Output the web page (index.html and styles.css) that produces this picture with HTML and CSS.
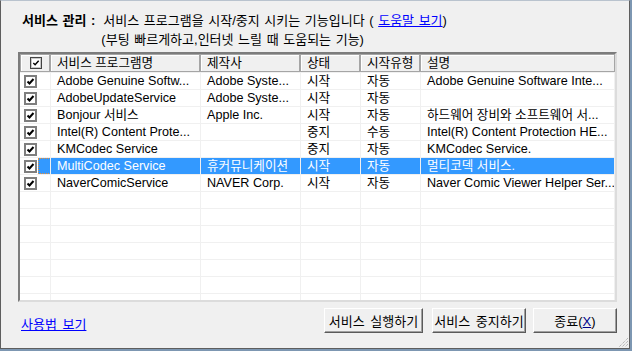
FILE: index.html
```html
<!DOCTYPE html>
<html lang="ko">
<head>
    <meta charset="UTF-8">
    <title>서비스 관리</title>
    <link rel="stylesheet" href="styles.css">
</head>
<body>
    <div class="frame">
        <div class="dlg">
            <div class="intro">
                <b class="intro-title">서비스 관리 :</b>
                <span>서비스 프로그램을 시작/중지 시키는 기능입니다 ( <a href="#">도움말 보기</a>)</span>
                <span class="intro-sub">(부팅 빠르게하고,인터넷 느릴 때 도움되는 기능)</span>
            </div>

            <div class="list">
                <div class="row head">
                    <div class="cell"><span class="hchk"><svg viewBox="0 0 9 9"><path d="M1.5 4.5 L3.5 6.5 L7.5 2"/></svg></span></div>
                    <div class="cell">서비스 프로그램명</div>
                    <div class="cell">제작사</div>
                    <div class="cell">상태</div>
                    <div class="cell">시작유형</div>
                    <div class="cell">설명</div>
                </div>

                <div class="row">
                    <div class="cell"><span class="chk"><svg viewBox="0 0 9 9"><path d="M1.5 4.5 L3.5 6.5 L7.5 2"/></svg></span></div>
                    <div class="cell">Adobe Genuine Softw...</div>
                    <div class="cell">Adobe Syste...</div>
                    <div class="cell">시작</div>
                    <div class="cell">자동</div>
                    <div class="cell">Adobe Genuine Software Inte...</div>
                </div>
                <div class="row">
                    <div class="cell"><span class="chk"><svg viewBox="0 0 9 9"><path d="M1.5 4.5 L3.5 6.5 L7.5 2"/></svg></span></div>
                    <div class="cell">AdobeUpdateService</div>
                    <div class="cell">Adobe Syste...</div>
                    <div class="cell">시작</div>
                    <div class="cell">자동</div>
                    <div class="cell"></div>
                </div>
                <div class="row">
                    <div class="cell"><span class="chk"><svg viewBox="0 0 9 9"><path d="M1.5 4.5 L3.5 6.5 L7.5 2"/></svg></span></div>
                    <div class="cell">Bonjour 서비스</div>
                    <div class="cell">Apple Inc.</div>
                    <div class="cell">시작</div>
                    <div class="cell">자동</div>
                    <div class="cell">하드웨어 장비와 소프트웨어 서...</div>
                </div>
                <div class="row">
                    <div class="cell"><span class="chk"><svg viewBox="0 0 9 9"><path d="M1.5 4.5 L3.5 6.5 L7.5 2"/></svg></span></div>
                    <div class="cell">Intel(R) Content Prote...</div>
                    <div class="cell"></div>
                    <div class="cell">중지</div>
                    <div class="cell">수동</div>
                    <div class="cell">Intel(R) Content Protection HE...</div>
                </div>
                <div class="row">
                    <div class="cell"><span class="chk"><svg viewBox="0 0 9 9"><path d="M1.5 4.5 L3.5 6.5 L7.5 2"/></svg></span></div>
                    <div class="cell">KMCodec Service</div>
                    <div class="cell"></div>
                    <div class="cell">중지</div>
                    <div class="cell">자동</div>
                    <div class="cell">KMCodec Service.</div>
                </div>
                <div class="row sel">
                    <div class="cell"><span class="chk"><svg viewBox="0 0 9 9"><path d="M1.5 4.5 L3.5 6.5 L7.5 2"/></svg></span></div>
                    <div class="cell">MultiCodec Service</div>
                    <div class="cell">휴커뮤니케이션</div>
                    <div class="cell">시작</div>
                    <div class="cell">자동</div>
                    <div class="cell">멀티코덱 서비스.</div>
                </div>
                <div class="row">
                    <div class="cell"><span class="chk"><svg viewBox="0 0 9 9"><path d="M1.5 4.5 L3.5 6.5 L7.5 2"/></svg></span></div>
                    <div class="cell">NaverComicService</div>
                    <div class="cell">NAVER Corp.</div>
                    <div class="cell">시작</div>
                    <div class="cell">자동</div>
                    <div class="cell">Naver Comic Viewer Helper Ser...</div>
                </div>

                <!-- empty rows fill the rest of the list -->
                <div class="row"><div class="cell"></div><div class="cell"></div><div class="cell"></div><div class="cell"></div><div class="cell"></div><div class="cell"></div></div>
                <div class="row"><div class="cell"></div><div class="cell"></div><div class="cell"></div><div class="cell"></div><div class="cell"></div><div class="cell"></div></div>
                <div class="row"><div class="cell"></div><div class="cell"></div><div class="cell"></div><div class="cell"></div><div class="cell"></div><div class="cell"></div></div>
                <div class="row"><div class="cell"></div><div class="cell"></div><div class="cell"></div><div class="cell"></div><div class="cell"></div><div class="cell"></div></div>
                <div class="row"><div class="cell"></div><div class="cell"></div><div class="cell"></div><div class="cell"></div><div class="cell"></div><div class="cell"></div></div>
                <div class="row"><div class="cell"></div><div class="cell"></div><div class="cell"></div><div class="cell"></div><div class="cell"></div><div class="cell"></div></div>
                <div class="row"><div class="cell"></div><div class="cell"></div><div class="cell"></div><div class="cell"></div><div class="cell"></div><div class="cell"></div></div>
            </div>

            <div class="foot">
                <a href="#" class="howto">사용법 보기</a>
                <div class="btns">
                    <button class="btn btn-run">서비스 실행하기</button>
                    <button class="btn btn-stop">서비스 중지하기</button>
                    <button class="btn btn-close">종료(<u>X</u>)</button>
                </div>
            </div>

            <svg class="grip" viewBox="0 0 12 12">
                <path d="M11 2 L2 11 M11 5 L5 11 M11 8 L8 11"/>
            </svg>
        </div>
    </div>
</body>
</html>
```

FILE: styles.css
```css
body {
    margin: 0;
    background: #f0f0f0;
    font-family: "Liberation Sans", "Noto Sans CJK KR", sans-serif;
    font-size: 13px;
    color: #000;
}

.frame {
    width: 632px;
    height: 351px;
    box-sizing: border-box;
    border-right: 2px solid #7d97b2;
    border-bottom: 2px solid #7d97b2;
    background: #7d97b2;
}

.dlg {
    position: relative;
    height: 349px;
    box-sizing: border-box;
    background: #f0f0f0;
    border-top: 1px solid #b9c3ce;
    border-left: 1px solid #5e5e5e;
    border-right: 1px solid #5e5e5e;
    border-bottom: 1px solid #5e5e5e;
    padding: 10px 12px 0 17px;
}

a {
    color: #0000ff;
    text-decoration: underline;
}

/* top description */
.intro {
    display: grid;
    grid-template-columns: auto 1fr;
    column-gap: 8px;
    line-height: 19px;
    margin-left: 4px;
    word-spacing: 1px;
}
.intro-title {
    font-weight: bold;
}
.intro-sub {
    grid-column: 2;
    margin-left: -2px;
}

/* service list */
.list {
    margin-top: 3px;
    height: 250px;
    box-sizing: border-box;
    overflow: hidden;
    background: #fff;
    border: 2px solid;
    border-color: #7c7c7c #dcdcdc #dcdcdc #7c7c7c;
    font-size: 12.6px;
}
.row {
    display: grid;
    grid-template-columns: 30px 150px 100px 60px 60px 195px;
    height: 17px;
    line-height: 17px;
}
.cell {
    box-sizing: border-box;
    border-top: 1px solid #f0f0f0;
    padding-left: 6px;
    white-space: nowrap;
    overflow: hidden;
}
.cell + .cell {
    border-left: 1px solid #f0f0f0;
}
.cell:last-child {
    border-right: 1px solid #f0f0f0;
}
.row .cell:first-child {
    padding-left: 4px;
    display: flex;
    align-items: center;
}

.head {
    height: 18px;
    line-height: 16px;
    background: #f0f0f0;
}
.head .cell {
    border: 1px solid #a5a5a5;
    box-shadow: inset 1px 1px #fff;
}
.head .cell:first-child {
    justify-content: center;
    padding-left: 2px;
}

.chk {
    width: 13px;
    height: 13px;
    box-sizing: border-box;
    border: 2px solid #7e7e7e;
    background: #fff;
    display: flex;
    align-items: center;
    justify-content: center;
}
.chk svg {
    width: 9px;
    height: 9px;
    fill: none;
    stroke: #000;
    stroke-width: 2;
}
.hchk {
    width: 12px;
    height: 12px;
    box-sizing: border-box;
    border: 1px solid #444;
    box-shadow: inset 0 0 0 1px #c8c8c8;
    background: #fff;
    display: flex;
    align-items: center;
    justify-content: center;
}
.hchk svg {
    width: 8px;
    height: 8px;
    fill: none;
    stroke: #000;
    stroke-width: 1.6;
}

/* selected row */
.sel .cell {
    background: #3399ff;
    color: #fff;
}
.sel .cell:first-child {
    position: relative;
    background: linear-gradient(to right, #fff 18px, #3399ff 18px);
}
.sel .cell:first-child::after {
    content: "";
    position: absolute;
    left: 18px;
    top: 0;
    width: 577px;
    height: 16px;
    box-sizing: border-box;
    border: 1px dotted #e8903a;
}

/* bottom bar */
.foot {
    display: flex;
    justify-content: space-between;
    margin-top: 6px;
}
.howto {
    margin: 10px 0 0 3px;
    line-height: 14px;
    height: 14px;
    word-spacing: 2px;
}
.btns {
    display: flex;
}
.btn {
    height: 25px;
    box-sizing: border-box;
    font: inherit;
    word-spacing: 2px;
    color: #000;
    background: #f0f0f0;
    border: 1px solid;
    border-color: #fff #5a5a5a #5a5a5a #fff;
    box-shadow: inset -1px -1px #a0a0a0;
    padding: 0;
}
.btn-run {
    width: 99px;
}
.btn-stop {
    width: 94px;
    margin-left: 9px;
}
.btn-close {
    width: 84px;
    margin-left: 7px;
}
.btn u {
    color: #00008b;
}

.grip {
    position: absolute;
    right: 0;
    bottom: 0;
    width: 12px;
    height: 12px;
    fill: none;
    stroke: #a0a0a0;
    stroke-width: 1;
    stroke-dasharray: 1 1;
}
```
